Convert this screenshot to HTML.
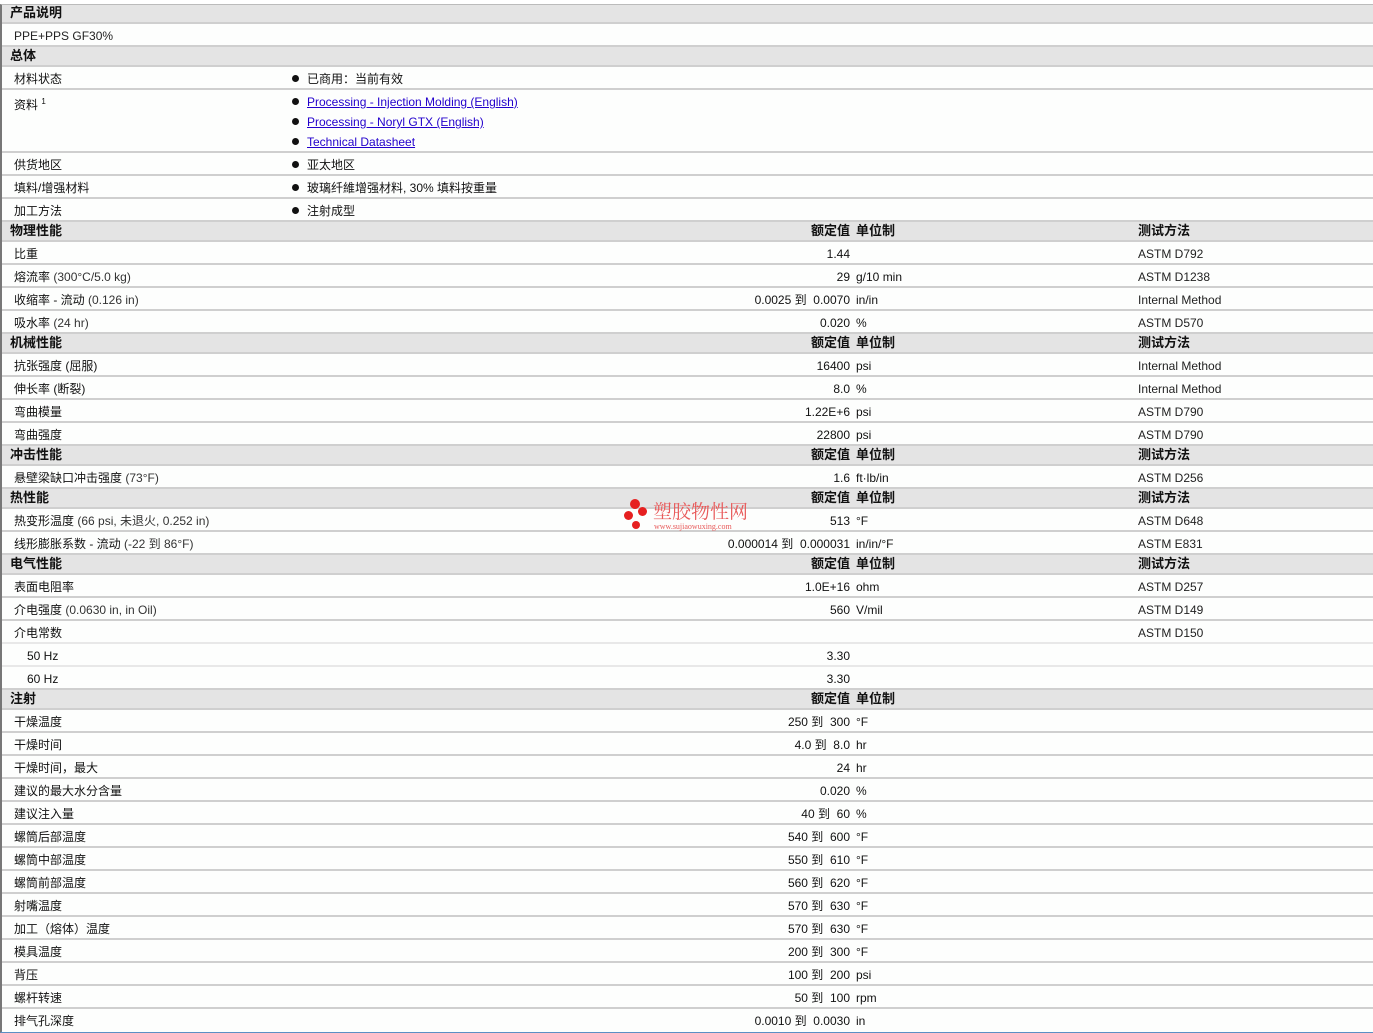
<!DOCTYPE html>
<html><head><meta charset="utf-8"><style>
*{margin:0;padding:0;box-sizing:border-box}
body{width:1373px;height:1033px;background:#fff;font-family:"Liberation Sans","Noto Sans CJK SC","WenQuanYi Zen Hei",sans-serif;font-size:12px;color:#111;position:relative;overflow:hidden}
.frame{position:absolute;left:0;top:4px;width:1373px;height:1029px;border-left:2px solid #777;border-top:1px solid #bbb;border-bottom:2px solid #5b8fc4}
.r{position:absolute;left:2px;width:1371px;border-bottom:2px solid #cfcfcf;background:#fdfefd}
.h{background:#e4e4e4;height:20px;font-weight:bold;font-size:13px}
.d{height:23px}
.t{position:absolute;top:4px;white-space:nowrap;line-height:16px}
.h .t{top:1px}
.l{left:12px}
.sub{color:#333}
.v{right:calc(1371px - 848px);text-align:right}
.u{left:854px}
.m{left:1136px;color:#222}
.b{left:290px}
.b i{display:inline-block;width:7px;height:7px;border-radius:50%;background:#111;margin-right:8px;vertical-align:1px}
a{color:#2200cc;text-decoration:underline}
.wm{position:absolute;left:622px;top:498px}
.dot{position:absolute;border-radius:50%;background:#e62020}
</style></head><body>
<div class="frame"></div>

<div class="r h" style="top:5px;height:19px"><span class="t l" style="left:8px;top:0">产品说明</span></div>
<div class="r d" style="top:24px"><span class="t l" style="color:#222">PPE+PPS GF30%</span></div>
<div class="r h" style="top:47px"><span class="t l" style="left:8px">总体</span></div>
<div class="r d" style="top:67px"><span class="t l">材料状态</span><span class="t b"><i></i>已商用：当前有效</span></div>
<div class="r" style="top:90px;height:63px"><span class="t l">资料 <sup style="font-size:8px">1</sup></span>
<span class="t b"><i></i><a>Processing - Injection Molding (English)</a></span>
<span class="t b" style="top:24px"><i></i><a>Processing - Noryl GTX (English)</a></span>
<span class="t b" style="top:44px"><i></i><a>Technical Datasheet</a></span></div>
<div class="r d" style="top:153px"><span class="t l">供货地区</span><span class="t b"><i></i>亚太地区</span></div>
<div class="r d" style="top:176px"><span class="t l">填料/增强材料</span><span class="t b"><i></i>玻璃纤維增强材料, 30% 填料按重量</span></div>
<div class="r d" style="top:199px"><span class="t l">加工方法</span><span class="t b"><i></i>注射成型</span></div>

<div class="r h" style="top:222px"><span class="t l" style="left:8px">物理性能</span><span class="t v">额定值</span><span class="t u">单位制</span><span class="t m" style="color:#111">测试方法</span></div>
<div class="r d" style="top:242px"><span class="t l">比重</span><span class="t v">1.44</span><span class="t m">ASTM D792</span></div>
<div class="r d" style="top:265px"><span class="t l">熔流率 <span class="sub">(300°C/5.0 kg)</span></span><span class="t v">29</span><span class="t u">g/10 min</span><span class="t m">ASTM D1238</span></div>
<div class="r d" style="top:288px"><span class="t l">收缩率 - 流动 <span class="sub">(0.126 in)</span></span><span class="t v">0.0025 到&nbsp; 0.0070</span><span class="t u">in/in</span><span class="t m">Internal Method</span></div>
<div class="r d" style="top:311px"><span class="t l">吸水率 <span class="sub">(24 hr)</span></span><span class="t v">0.020</span><span class="t u">%</span><span class="t m">ASTM D570</span></div>

<div class="r h" style="top:334px"><span class="t l" style="left:8px">机械性能</span><span class="t v">额定值</span><span class="t u">单位制</span><span class="t m" style="color:#111">测试方法</span></div>
<div class="r d" style="top:354px"><span class="t l">抗张强度 (屈服)</span><span class="t v">16400</span><span class="t u">psi</span><span class="t m">Internal Method</span></div>
<div class="r d" style="top:377px"><span class="t l">伸长率 (断裂)</span><span class="t v">8.0</span><span class="t u">%</span><span class="t m">Internal Method</span></div>
<div class="r d" style="top:400px"><span class="t l">弯曲模量</span><span class="t v">1.22E+6</span><span class="t u">psi</span><span class="t m">ASTM D790</span></div>
<div class="r d" style="top:423px"><span class="t l">弯曲强度</span><span class="t v">22800</span><span class="t u">psi</span><span class="t m">ASTM D790</span></div>

<div class="r h" style="top:446px"><span class="t l" style="left:8px">冲击性能</span><span class="t v">额定值</span><span class="t u">单位制</span><span class="t m" style="color:#111">测试方法</span></div>
<div class="r d" style="top:466px"><span class="t l">悬壁梁缺口冲击强度 <span class="sub">(73°F)</span></span><span class="t v">1.6</span><span class="t u">ft·lb/in</span><span class="t m">ASTM D256</span></div>

<div class="r h" style="top:489px"><span class="t l" style="left:8px">热性能</span><span class="t v">额定值</span><span class="t u">单位制</span><span class="t m" style="color:#111">测试方法</span></div>
<div class="r d" style="top:509px"><span class="t l">热变形温度 <span class="sub">(66 psi, 未退火, 0.252 in)</span></span><span class="t v">513</span><span class="t u">°F</span><span class="t m">ASTM D648</span></div>
<div class="r d" style="top:532px"><span class="t l">线形膨胀系数 - 流动 <span class="sub">(-22 到 86°F)</span></span><span class="t v">0.000014 到&nbsp; 0.000031</span><span class="t u">in/in/°F</span><span class="t m">ASTM E831</span></div>

<div class="r h" style="top:555px"><span class="t l" style="left:8px">电气性能</span><span class="t v">额定值</span><span class="t u">单位制</span><span class="t m" style="color:#111">测试方法</span></div>
<div class="r d" style="top:575px"><span class="t l">表面电阻率</span><span class="t v">1.0E+16</span><span class="t u">ohm</span><span class="t m">ASTM D257</span></div>
<div class="r d" style="top:598px"><span class="t l">介电强度 <span class="sub">(0.0630 in, in Oil)</span></span><span class="t v">560</span><span class="t u">V/mil</span><span class="t m">ASTM D149</span></div>
<div class="r d" style="top:621px;border-bottom-color:#e8e8e8"><span class="t l">介电常数</span><span class="t m">ASTM D150</span></div>
<div class="r d" style="top:644px;border-bottom-color:#e8e8e8"><span class="t l" style="left:25px">50 Hz</span><span class="t v">3.30</span></div>
<div class="r d" style="top:667px"><span class="t l" style="left:25px">60 Hz</span><span class="t v">3.30</span></div>

<div class="r h" style="top:690px"><span class="t l" style="left:8px">注射</span><span class="t v">额定值</span><span class="t u">单位制</span></div>
<div class="r d" style="top:710px"><span class="t l">干燥温度</span><span class="t v">250 到&nbsp; 300</span><span class="t u">°F</span></div>
<div class="r d" style="top:733px"><span class="t l">干燥时间</span><span class="t v">4.0 到&nbsp; 8.0</span><span class="t u">hr</span></div>
<div class="r d" style="top:756px"><span class="t l">干燥时间，最大</span><span class="t v">24</span><span class="t u">hr</span></div>
<div class="r d" style="top:779px"><span class="t l">建议的最大水分含量</span><span class="t v">0.020</span><span class="t u">%</span></div>
<div class="r d" style="top:802px"><span class="t l">建议注入量</span><span class="t v">40 到&nbsp; 60</span><span class="t u">%</span></div>
<div class="r d" style="top:825px"><span class="t l">螺筒后部温度</span><span class="t v">540 到&nbsp; 600</span><span class="t u">°F</span></div>
<div class="r d" style="top:848px"><span class="t l">螺筒中部温度</span><span class="t v">550 到&nbsp; 610</span><span class="t u">°F</span></div>
<div class="r d" style="top:871px"><span class="t l">螺筒前部温度</span><span class="t v">560 到&nbsp; 620</span><span class="t u">°F</span></div>
<div class="r d" style="top:894px"><span class="t l">射嘴温度</span><span class="t v">570 到&nbsp; 630</span><span class="t u">°F</span></div>
<div class="r d" style="top:917px"><span class="t l">加工（熔体）温度</span><span class="t v">570 到&nbsp; 630</span><span class="t u">°F</span></div>
<div class="r d" style="top:940px"><span class="t l">模具温度</span><span class="t v">200 到&nbsp; 300</span><span class="t u">°F</span></div>
<div class="r d" style="top:963px"><span class="t l">背压</span><span class="t v">100 到&nbsp; 200</span><span class="t u">psi</span></div>
<div class="r d" style="top:986px"><span class="t l">螺杆转速</span><span class="t v">50 到&nbsp; 100</span><span class="t u">rpm</span></div>
<div class="r d" style="top:1009px;border-bottom:none"><span class="t l">排气孔深度</span><span class="t v">0.0010 到&nbsp; 0.0030</span><span class="t u">in</span></div>

<div class="wm">
<div class="dot" style="left:8px;top:1px;width:10px;height:10px"></div>
<div class="dot" style="left:16px;top:9px;width:9px;height:9px"></div>
<div class="dot" style="left:2px;top:13px;width:9px;height:9px"></div>
<div class="dot" style="left:10px;top:23px;width:8px;height:8px"></div>
<span style="position:absolute;left:31px;top:2px;font-size:19px;line-height:22px;color:#e85a5a;white-space:nowrap;font-family:'Noto Serif CJK SC',serif">塑胶物性网</span>
<span style="position:absolute;left:32px;top:24px;font-size:8px;line-height:9px;color:#e85a5a;white-space:nowrap;font-family:'Liberation Serif',serif">www.sujiaowuxing.com</span>
</div>
</body></html>
